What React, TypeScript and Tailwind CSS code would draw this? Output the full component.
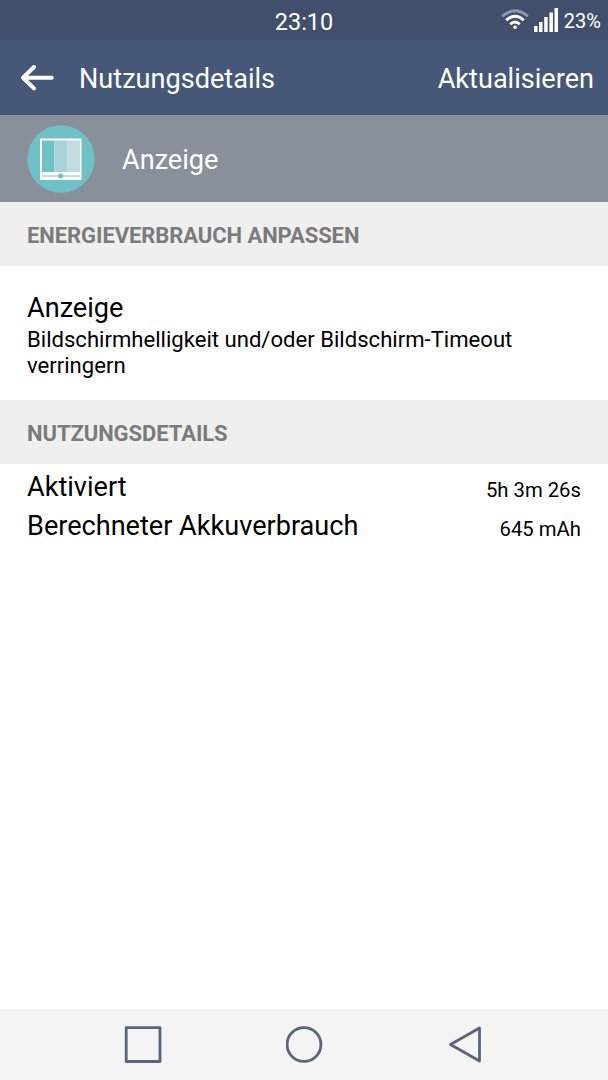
import type { ReactNode } from "react";

const USAGE = [
  { label: "Aktiviert", value: "5h 3m 26s" },
  { label: "Berechneter Akkuverbrauch", value: "645 mAh" },
];

function WifiIcon() {
  return (
    <svg width="28" height="22" viewBox="0 0 28 22" fill="none" strokeWidth="2.8">
      <path d="M1.2 7.2Q14 -3.6 26.8 7.2" stroke="#8f99ab" />
      <path d="M5.2 11.2Q14 3.4 22.8 11.2" stroke="#fff" />
      <path d="M9.2 15.2Q14 10.8 18.8 15.2" stroke="#fff" />
      <circle cx="14" cy="18.3" r="1.8" fill="#fff" />
    </svg>
  );
}

function SignalIcon() {
  return (
    <svg width="24" height="24" viewBox="0 0 24 24" fill="#fff">
      <rect x="0" y="18" width="3.5" height="6" />
      <rect x="5" y="14" width="3.5" height="10" />
      <rect x="10.2" y="9" width="3.5" height="15" />
      <rect x="15.4" y="4.5" width="3.5" height="19.5" />
      <rect x="20.5" y="0" width="3.5" height="24" />
    </svg>
  );
}

function BackIcon() {
  return (
    <svg
      width="34"
      height="28"
      viewBox="0 0 34 28"
      fill="none"
      stroke="#fff"
      strokeWidth="4"
      strokeLinecap="round"
      strokeLinejoin="round"
    >
      <path d="M14 3 3 13.7l11 10.7M4 13.7h27.7" />
    </svg>
  );
}

function DisplayIcon() {
  return (
    <svg width="68" height="68" viewBox="0 0 68 68">
      <circle cx="34" cy="34" r="33.7" fill="#6fc1c8" />
      <rect x="13" y="13.5" width="41.5" height="41.5" fill="#fff" />
      <rect x="15" y="15.5" width="12.5" height="31.5" fill="#6fc1c8" />
      <rect x="27.5" y="15.5" width="12.5" height="31.5" fill="#a9d3d8" />
      <rect x="40" y="15.5" width="13" height="31.5" fill="#c3dce1" />
      <rect x="15" y="50.4" width="38" height="1.2" fill="#8fcdd2" />
      <circle cx="33.8" cy="51" r="2.5" fill="#6fc1c8" />
    </svg>
  );
}

function SectionHeader({ children }: { children: ReactNode }) {
  return (
    <h2 className="flex h-16 items-center bg-[#efefef] px-[27px] pt-0.5 text-[22px] font-bold tracking-[-0.07px] text-[#7b7b7b]">
      {children}
    </h2>
  );
}

export default function App() {
  return (
    <div className="flex h-[1080px] w-[608px] flex-col overflow-hidden bg-white font-['Roboto',sans-serif] text-black">
      <div className="grid h-10 shrink-0 grid-cols-3 items-center bg-[#414f6d] text-white">
        <span className="col-start-2 pt-[5px] text-center text-[23.5px] leading-none">23:10</span>
        <div className="flex items-center justify-end pr-[7px]">
          <WifiIcon />
          <span className="ml-[5px]">
            <SignalIcon />
          </span>
          <span className="ml-1.5 pt-px text-[20px] leading-none">23%</span>
        </div>
      </div>

      <header className="flex h-[75px] shrink-0 items-center bg-[#465878] pl-5 pr-3.5 text-white">
        <button type="button" aria-label="Zurück">
          <BackIcon />
        </button>
        <h1 className="ml-[25px] pt-1 text-[27.1px] leading-[27px]">Nutzungsdetails</h1>
        <button type="button" className="ml-auto pt-1 text-[27.1px] leading-[27px]">
          Aktualisieren
        </button>
      </header>

      <div className="flex h-[87px] shrink-0 items-center bg-[#898f9b] pl-[27px] text-white">
        <DisplayIcon />
        <span className="ml-[27px] pt-1 text-[27.1px] leading-[27px]">Anzeige</span>
      </div>

      <main className="flex-1">
        <SectionHeader>ENERGIEVERBRAUCH ANPASSEN</SectionHeader>
        <div className="h-[134px] px-[27px] pt-6">
          <div className="text-[27.1px] leading-9">Anzeige</div>
          <p className="text-[22.1px] leading-[26px]">
            Bildschirmhelligkeit und/oder Bildschirm-Timeout verringern
          </p>
        </div>

        <SectionHeader>NUTZUNGSDETAILS</SectionHeader>
        <div className="px-[27px] pt-1">
          {USAGE.map((row) => (
            <div key={row.label} className="flex h-[39px] items-center justify-between">
              <span className="text-[27.1px] leading-[27px]">{row.label}</span>
              <span className="pt-1 text-[20.3px] leading-5">{row.value}</span>
            </div>
          ))}
        </div>
      </main>

      <nav className="flex h-[71px] shrink-0 items-center justify-between bg-[#f4f4f4] pl-[124px] pr-[126px]">
        <svg width="38" height="38" viewBox="0 0 38 38" fill="none" stroke="#59657a" strokeWidth="2.8">
          <rect x="2.2" y="1.7" width="33.8" height="33.8" strokeLinejoin="round" />
        </svg>
        <svg width="38" height="38" viewBox="0 0 38 38" fill="none" stroke="#59657a" strokeWidth="2.8">
          <circle cx="18" cy="18.5" r="16.9" />
        </svg>
        <svg width="34" height="38" viewBox="0 0 34 38" fill="none" stroke="#59657a" strokeWidth="2.8">
          <path d="M31.5 2v33L2.5 18.5z" strokeLinejoin="round" />
        </svg>
      </nav>
    </div>
  );
}
